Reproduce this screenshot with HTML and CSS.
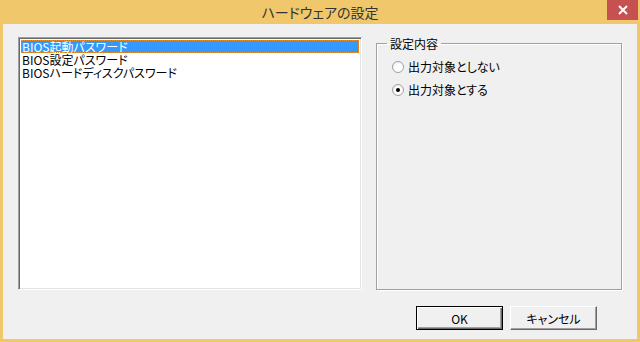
FILE: index.html
```html
<!DOCTYPE html>
<html lang="ja">
<head>
<meta charset="utf-8">
<title>ハードウェアの設定</title>
<link rel="stylesheet" href="styles.css">
</head>
<body>
<div class="window">
  <div class="titlebar">
    <span class="title">ハードウェアの設定</span>
    <div class="close">
      <svg width="10" height="10" viewBox="0 0 10 10"><path d="M1 1 L9 9 M9 1 L1 9" stroke="#fff" stroke-width="2" fill="none"/></svg>
    </div>
  </div>
  <div class="client">
    <div class="main">
      <div class="listbox">
        <div class="item selected">BIOS起動パスワード</div>
        <div class="item">BIOS設定パスワード</div>
        <div class="item">BIOSハードディスクパスワード</div>
      </div>
      <fieldset class="group">
        <legend>設定内容</legend>
        <div class="radio"><span class="circle"></span><span>出力対象としない</span></div>
        <div class="radio"><span class="circle checked"></span><span>出力対象とする</span></div>
      </fieldset>
    </div>
    <div class="buttons">
      <div class="btn default">OK</div>
      <div class="btn">キャンセル</div>
    </div>
  </div>
</div>
</body>
</html>
```
FILE: styles.css
```css
html, body {
  margin: 0;
  padding: 0;
}
body {
  width: 640px;
  height: 342px;
  overflow: hidden;
  font-family: "Noto Sans CJK JP", "Liberation Sans", sans-serif;
  font-feature-settings: "palt";
  font-size: 12px;
  color: #000;
}
.window {
  width: 640px;
  height: 342px;
  background: #f0c86b;
  display: flex;
  flex-direction: column;
}
.titlebar {
  height: 24px;
  position: relative;
  display: flex;
  align-items: center;
  justify-content: center;
}
.title {
  font-size: 14px;
  color: #333;
  line-height: 20px;
  margin-top: -1px;
}
.close {
  position: absolute;
  top: 0;
  right: 2px;
  width: 31px;
  height: 20px;
  background: #c75050;
  display: flex;
  align-items: center;
  justify-content: center;
}
.client {
  flex: 1;
  margin: 0 3px 3px 3px;
  background: #f0f0f0;
  padding: 13px 15px 9px 15px;
  display: flex;
  flex-direction: column;
}
.main {
  display: flex;
  gap: 14px;
  height: 253px;
}
.listbox {
  width: 344px;
  box-sizing: border-box;
  background: #fff;
  border-top: 1px solid #a0a0a0;
  border-left: 1px solid #a0a0a0;
  border-right: 1px solid #fff;
  border-bottom: 1px solid #fff;
  box-shadow: inset 1px 1px 0 #696969, inset -1px -1px 0 #e3e3e3;
  padding: 2px 2px;
}
.item {
  height: 13px;
  line-height: 13px;
  padding-left: 1px;
  white-space: nowrap;
}
.item.selected {
  background: #3399ff;
  color: #fff;
  outline: 1px dotted #e8902a;
  outline-offset: -1px;
}
.group {
  margin: 0;
  width: 246px;
  box-sizing: border-box;
  border: 1px solid #a0a0a0;
  box-shadow: 1px 1px 0 #fff, inset 1px 1px 0 #fff;
  padding: 10px 0 0 15px;
  min-width: 0;
}
.group legend {
  padding: 0 3px;
  margin-left: -5px;
  line-height: 13px;
  height: 13px;
}
.radio {
  display: flex;
  align-items: center;
  gap: 4px;
  height: 13px;
  line-height: 13px;
  margin-bottom: 10px;
}
.circle {
  width: 10px;
  height: 10px;
  border-radius: 50%;
  border: 1px solid #a0a0a0;
  background: radial-gradient(circle at 60% 60%, #fff 40%, #e6e6e6 100%);
  position: relative;
  flex: none;
}
.circle.checked::after {
  content: "";
  position: absolute;
  left: 3px;
  top: 3px;
  width: 4px;
  height: 4px;
  border-radius: 50%;
  background: #000;
}
.buttons {
  margin-top: 16px;
  display: flex;
  justify-content: flex-end;
  gap: 7px;
  padding-right: 25px;
}
.btn {
  width: 87px;
  height: 24px;
  box-sizing: border-box;
  display: flex;
  align-items: center;
  justify-content: center;
  background: #f0f0f0;
  border-top: 1px solid #fff;
  border-left: 1px solid #fff;
  border-right: 1px solid #696969;
  border-bottom: 1px solid #696969;
  box-shadow: inset -1px -1px 0 #a0a0a0;
}
.btn.default {
  border: 1px solid #000;
  box-shadow: inset 1px 1px 0 #fff, inset -1px -1px 0 #696969, inset -2px -2px 0 #a0a0a0;
}
```
